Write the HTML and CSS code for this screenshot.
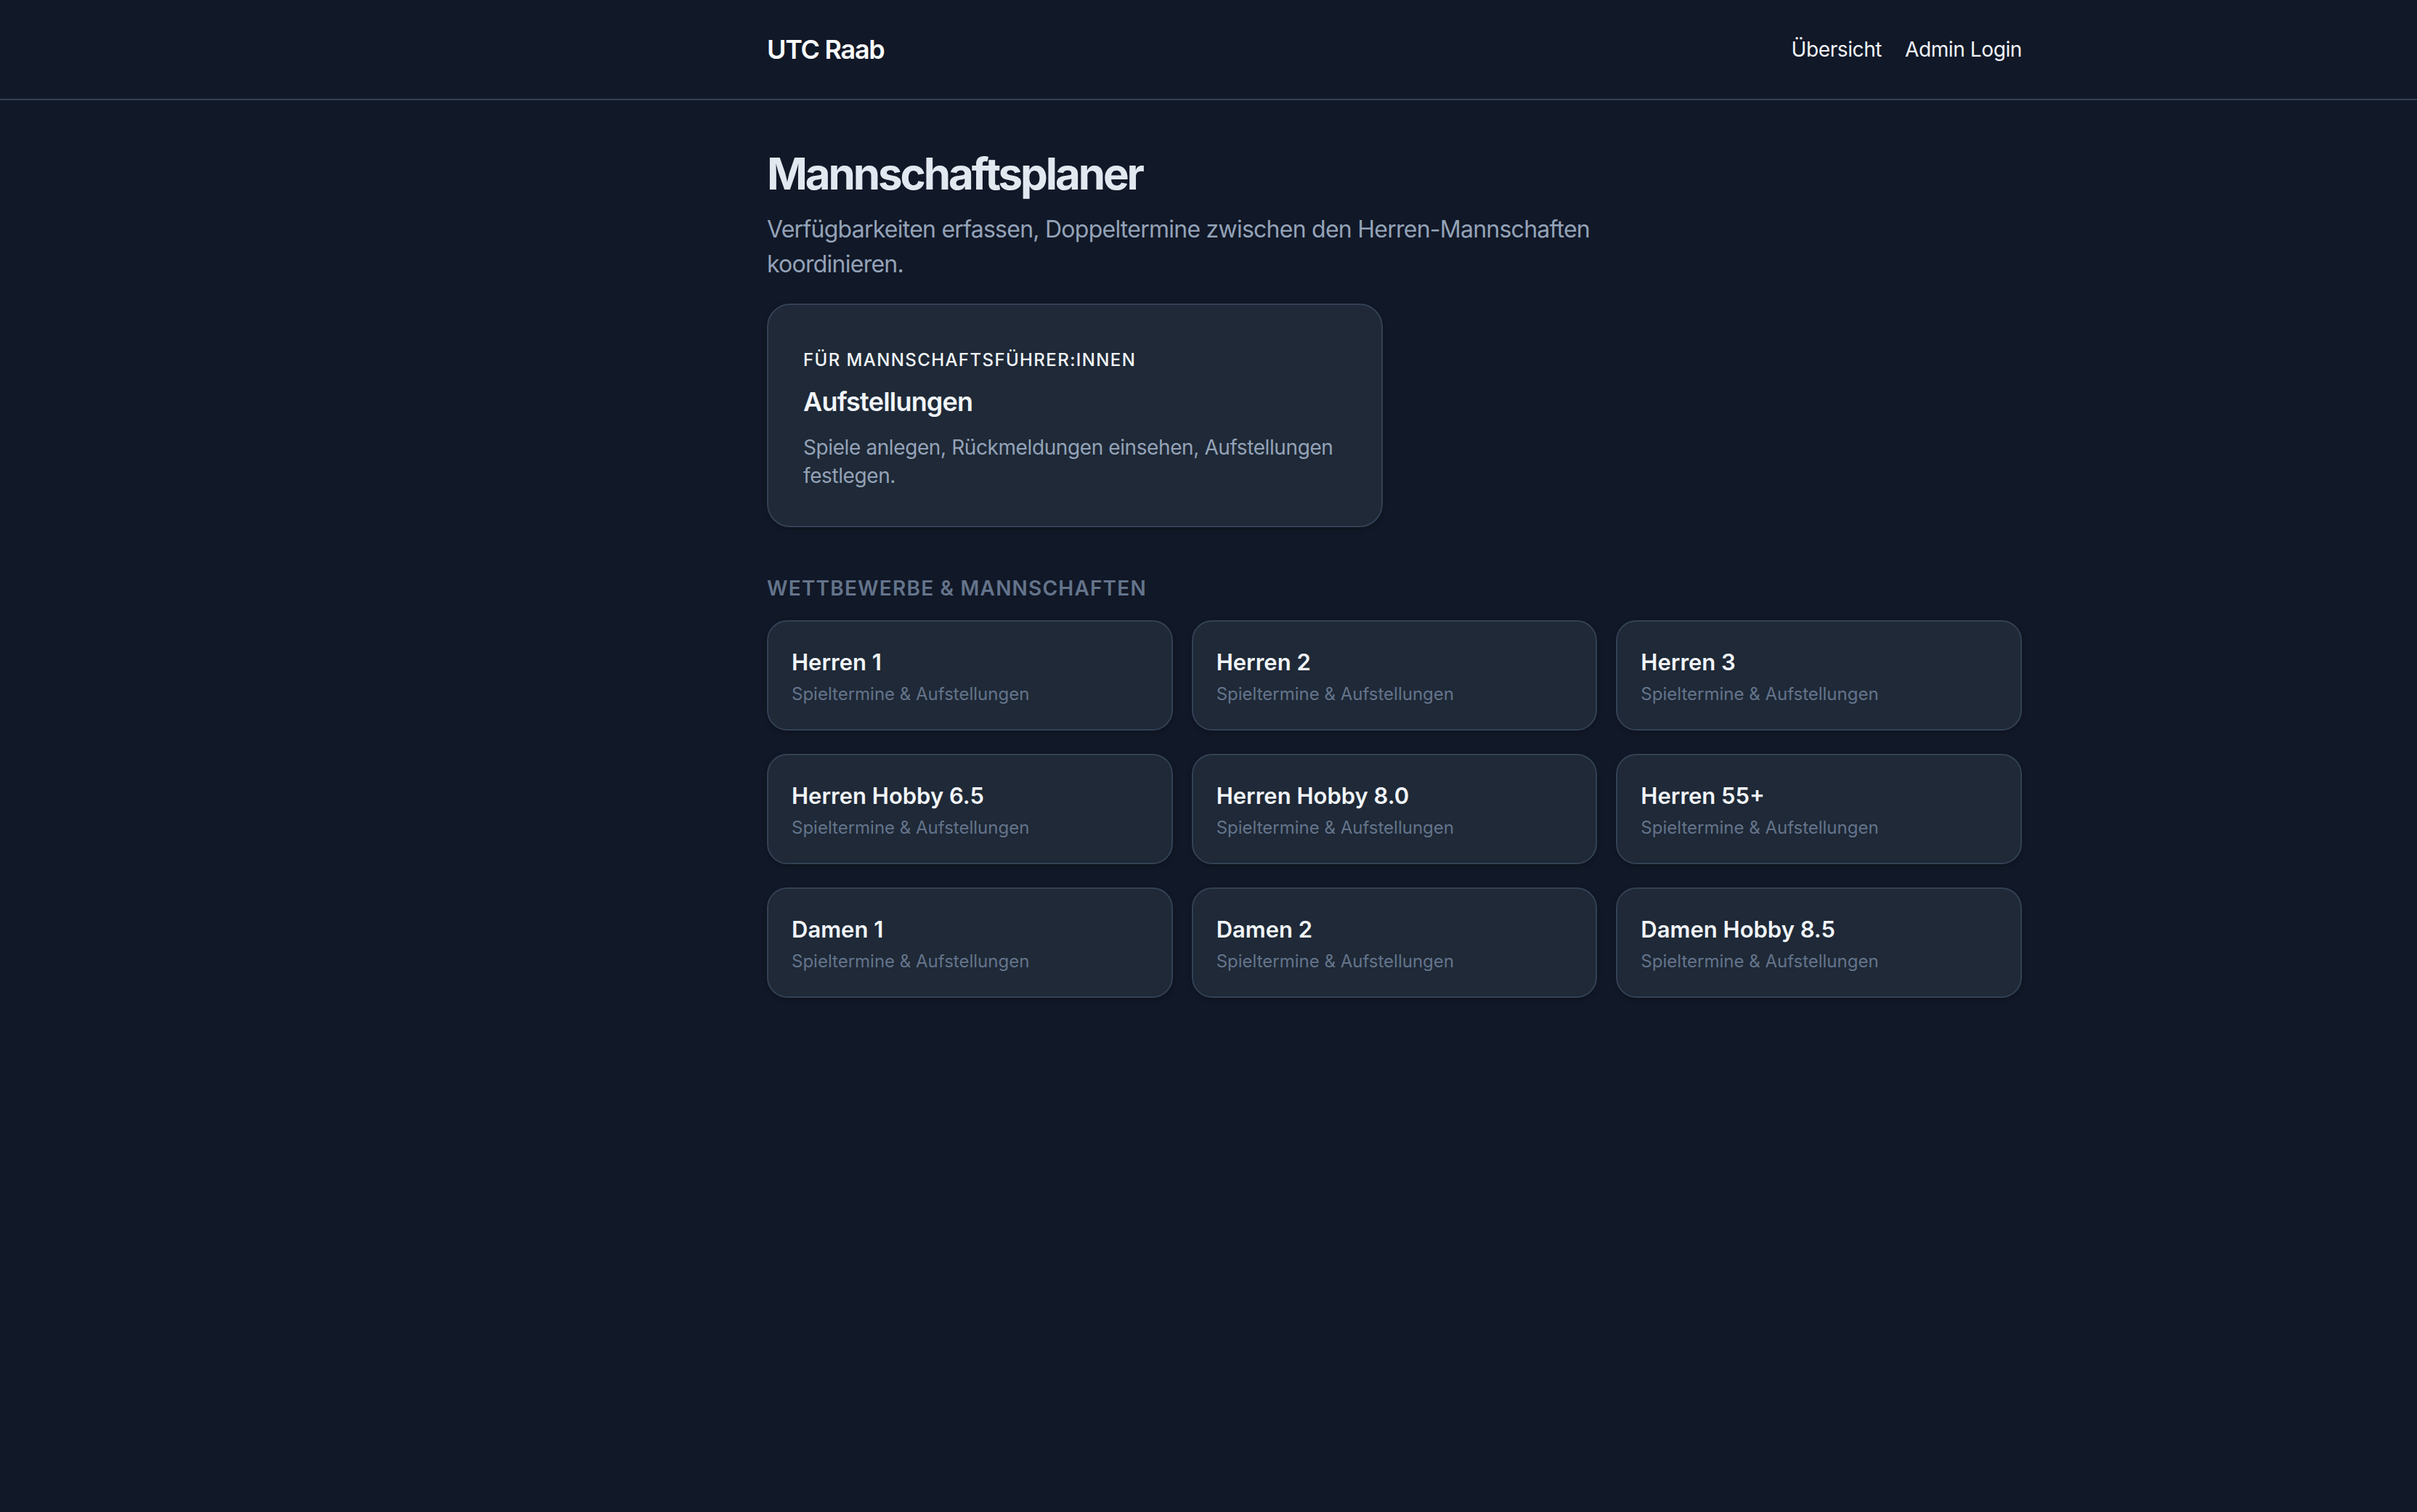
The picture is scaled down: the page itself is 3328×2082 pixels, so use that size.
FILE: index.html
```html
<!DOCTYPE html>
<html lang="de">
<head>
    <meta charset="UTF-8">
    <meta name="viewport" content="width=device-width, initial-scale=1.0">
    <title>Mannschaftsplaner – UTC Raab</title>
    <link rel="stylesheet" href="styles.css">
</head>
<body>

<header class="topbar">
    <div class="container topbar-inner">
        <a class="brand" href="#">UTC Raab</a>
        <nav class="nav">
            <a href="#">Übersicht</a>
            <a href="#">Admin Login</a>
        </nav>
    </div>
</header>

<main class="container main">
    <h1>Mannschaftsplaner</h1>
    <p class="lead">Verfügbarkeiten erfassen, Doppeltermine zwischen den Herren-Mannschaften koordinieren.</p>

    <div class="feature-grid">
        <a class="feature" href="#">
            <div class="eyebrow">Für Mannschaftsführer:innen</div>
            <h2>Aufstellungen</h2>
            <p>Spiele anlegen, Rückmeldungen einsehen, Aufstellungen festlegen.</p>
        </a>
    </div>

    <h3 class="section-title">Wettbewerbe &amp; Mannschaften</h3>

    <div class="team-grid">
        <a class="team" href="#"><div class="team-name">Herren 1</div><div class="team-sub">Spieltermine &amp; Aufstellungen</div></a>
        <a class="team" href="#"><div class="team-name">Herren 2</div><div class="team-sub">Spieltermine &amp; Aufstellungen</div></a>
        <a class="team" href="#"><div class="team-name">Herren 3</div><div class="team-sub">Spieltermine &amp; Aufstellungen</div></a>
        <a class="team" href="#"><div class="team-name">Herren Hobby 6.5</div><div class="team-sub">Spieltermine &amp; Aufstellungen</div></a>
        <a class="team" href="#"><div class="team-name">Herren Hobby 8.0</div><div class="team-sub">Spieltermine &amp; Aufstellungen</div></a>
        <a class="team" href="#"><div class="team-name">Herren 55+</div><div class="team-sub">Spieltermine &amp; Aufstellungen</div></a>
        <a class="team" href="#"><div class="team-name">Damen 1</div><div class="team-sub">Spieltermine &amp; Aufstellungen</div></a>
        <a class="team" href="#"><div class="team-name">Damen 2</div><div class="team-sub">Spieltermine &amp; Aufstellungen</div></a>
        <a class="team" href="#"><div class="team-name">Damen Hobby 8.5</div><div class="team-sub">Spieltermine &amp; Aufstellungen</div></a>
    </div>
</main>

</body>
</html>
```

FILE: styles.css
```css
* {
    margin: 0;
    padding: 0;
    box-sizing: border-box;
}
body {
    background-color: #111827;
    color: #e2e8f0;
    font-family: Inter, "Noto Sans", sans-serif;
    min-height: 100vh;
}
a {
    color: inherit;
    text-decoration: none;
}
/* content column sits right of centre, as in the original wide layout */
.container {
    width: 2240px;
    padding-left: 512px;
    margin: 0 auto;
}

/* header */
.topbar {
    border-bottom: 2px solid #334155;
}
.topbar-inner {
    height: 136px;
    display: flex;
    align-items: center;
    justify-content: space-between;
}
.brand {
    font-size: 36px;
    line-height: 56px;
    font-weight: 600;
    color: #f8fafc;
    letter-spacing: -1.3px;
}
.nav {
    display: flex;
    gap: 32px;
}
.nav a {
    font-size: 28px;
    line-height: 40px;
    color: #f1f5f9;
    letter-spacing: -0.4px;
}

/* intro */
.main {
    padding-top: 65px;
}
h1 {
    font-size: 60px;
    line-height: 72px;
    font-weight: 700;
    letter-spacing: -3.1px;
    color: #e2e8f0;
}
.lead {
    margin-top: 17px;
    max-width: 1152px;
    font-size: 32px;
    line-height: 48px;
    letter-spacing: -0.75px;
    color: #94a3b8;
}

/* feature card */
.feature-grid {
    margin-top: 30px;
    display: grid;
    grid-template-columns: 1fr 1fr;
    gap: 32px;
}
.feature {
    display: block;
    background: #1f2937;
    border: 2px solid #334155;
    border-radius: 32px;
    padding: 60px 48px 49px;
    box-shadow: 0 2px 6px rgba(0, 0, 0, 0.25);
}
.eyebrow {
    font-size: 24px;
    line-height: 32px;
    font-weight: 500;
    text-transform: uppercase;
    letter-spacing: 1.4px;
    color: #f1f5f9;
}
.feature h2 {
    margin-top: 13px;
    font-size: 36px;
    line-height: 56px;
    font-weight: 600;
    letter-spacing: -0.8px;
    color: #f1f5f9;
}
.feature p {
    margin-top: 16px;
    font-size: 28px;
    line-height: 39px;
    letter-spacing: -0.4px;
    color: #94a3b8;
}

/* teams */
.section-title {
    margin-top: 64px;
    font-size: 28px;
    line-height: 40px;
    font-weight: 600;
    text-transform: uppercase;
    letter-spacing: 1.2px;
    color: #64748b;
}
.team-grid {
    margin-top: 24px;
    display: grid;
    grid-template-columns: repeat(3, 1fr);
    column-gap: 26px;
    row-gap: 32px;
}
.team {
    display: block;
    background: #1f2937;
    border: 2px solid #334155;
    border-radius: 28px;
    padding: 32px;
    box-shadow: 0 2px 6px rgba(0, 0, 0, 0.25);
}
.team-name {
    font-size: 31px;
    line-height: 48px;
    font-weight: 600;
    color: #f1f5f9;
}
.team-sub {
    margin-top: 4px;
    font-size: 24px;
    line-height: 32px;
    color: #64748b;
}
```
